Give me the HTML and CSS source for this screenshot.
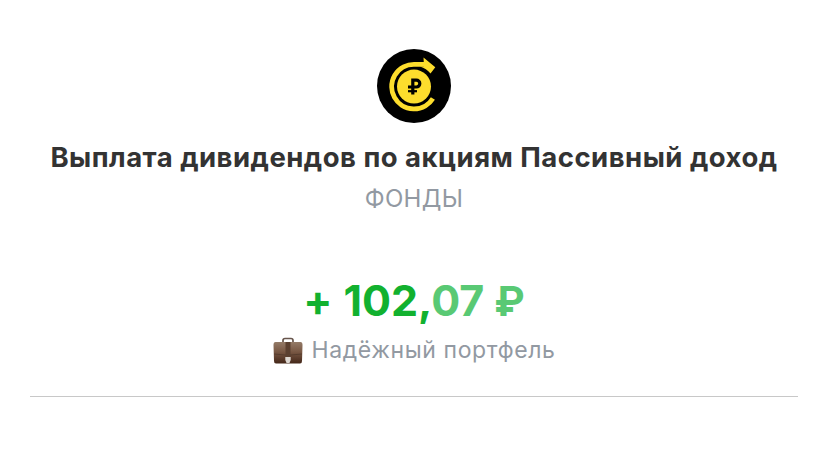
FILE: index.html
```html
<!DOCTYPE html>
<html lang="ru">
<head>
<meta charset="utf-8">
<title>Выплата дивидендов</title>
<link rel="stylesheet" href="styles.css">
</head>
<body>
<main class="operation">
  <svg class="logo" viewBox="0 0 74 74" aria-hidden="true">
    <circle cx="37" cy="37" r="37" fill="#000"/>
    <path d="M55.900 49.400A22.300 22.300 0 1 1 37 15.300H48" fill="none" stroke="#fddd2d" stroke-width="4.800"/>
    <path d="M46.500 8.500L58.300 18.300L53.500 24.500Q49.500 19.500 43 17.500H47Z" fill="#fddd2d"/>
    <circle cx="37" cy="37.600" r="17" fill="#fddd2d"/>
    <path d="M35.800 45.500V31.200H39.400a2.900 2.900 0 0 1 0 6.800H31" fill="none" stroke="#000" stroke-width="3.200"/>
    <path d="M31 42.200H40" stroke="#000" stroke-width="2.200"/>
  </svg>
  <h1 class="title">Выплата дивидендов по акциям Пассивный доход</h1>
  <p class="category">ФОНДЫ</p>
  <p class="amount"><span>+</span><span class="value">102,<span class="minor">07</span></span><span class="minor currency">₽</span></p>
  <div class="account">
    <svg class="briefcase" viewBox="0 0 30 28" aria-hidden="true">
      <defs>
        <linearGradient id="leather" x1="0" y1="0" x2="0" y2="1">
          <stop offset="0" stop-color="#947b68"/>
          <stop offset=".45" stop-color="#795844"/>
          <stop offset="1" stop-color="#442719"/>
        </linearGradient>
      </defs>
      <path d="M10 7V4.500Q10 2.500 12 2.500H18Q20 2.500 20 4.500V7" fill="none" stroke="#67554c" stroke-width="1.700"/>
      <path d="M2.500 6H27.500Q29.500 6 29.500 9L29 25Q29 27.500 27 27.500H3Q1 27.500 1 25L.5 9Q.5 6 2.500 6Z" fill="url(#leather)"/>
      <path d="M1 18Q15 20.500 29 18" fill="none" stroke="#51382b" stroke-width=".8"/>
      <path d="M12.500 6H17.500V21H12.500Z" fill="#5b4030"/>
      <path d="M12.300 21H17.700V24L16.500 27H13.500L12.300 24Z" fill="#ddd7d1"/>
    </svg>
    <span>Надёжный портфель</span>
  </div>
  <hr class="divider">
</main>
</body>
</html>
```
FILE: styles.css
```css
* { box-sizing: border-box; }
body {
  margin: 0;
  background: #fff;
  font-family: Inter, "Liberation Sans", sans-serif;
}
.operation {
  display: flex;
  flex-direction: column;
  align-items: center;
  height: 452px;
  padding: 49px 30px 0;
  white-space: nowrap;
}
.logo { width: 74px; height: 74px; }
.title {
  margin: 14px 0 0;
  font-size: 27.5px;
  font-weight: 650;
  line-height: 40px;
  letter-spacing: .48px;
  color: #333;
}
.category {
  margin: 4px 0 0;
  font-size: 24px;
  line-height: 36px;
  letter-spacing: .3px;
  color: #9299a2;
}
.amount {
  display: flex;
  align-items: baseline;
  gap: 11px;
  height: 60px;
  margin: 53px 0 0;
  font-size: 43px;
  font-weight: 650;
  line-height: 60px;
  color: #12b12f;
}
.minor { color: #59c974; }
.currency {
  margin-left: -1px;
  font-size: 41px;
}
.account {
  display: flex;
  align-items: center;
  gap: 9px;
  height: 40px;
  font-size: 23px;
  letter-spacing: .6px;
  color: #9299a2;
}
.briefcase { width: 30px; height: 28px; }
.divider {
  width: 768px;
  height: 1px;
  margin: 26px 0 0;
  border: 0;
  background: #c8c8c8;
}
```
